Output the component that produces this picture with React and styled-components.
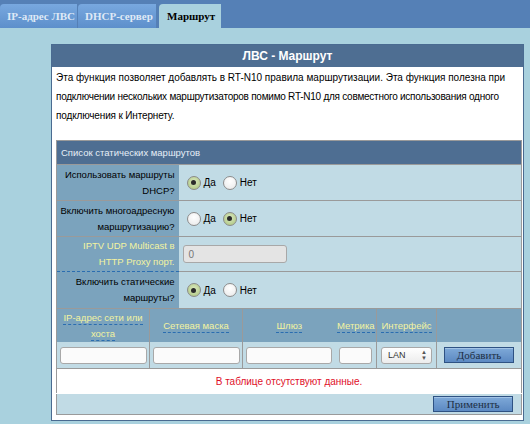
import React from "react";
import styled, { createGlobalStyle } from "styled-components";

const Global = createGlobalStyle`
  html, body { margin: 0; padding: 0; }
  body {
    background: #a9d1de;
    font-family: "Liberation Sans", Arial, sans-serif;
    font-size: 10px;
    color: #000;
  }
`;

const TabBar = styled.div`
  height: 28px;
  background: #5580b6;
  display: flex;
  align-items: flex-end;
  gap: 1px;
  box-sizing: border-box;
`;

const Tab = styled.div`
  height: 24px;
  box-sizing: border-box;
  padding: 0 0 0 ${(p) => (p.$active ? 8 : 7)}px;
  display: flex;
  align-items: center;
  white-space: nowrap;
  font-family: "Liberation Serif", "Times New Roman", serif;
  font-weight: bold;
  font-size: 11px;
  border-radius: 4px 0 0 0;
  margin-left: ${(p) => (p.$active ? "2px" : "0")};
  color: ${(p) => (p.$active ? "#000" : "#dfe9f6")};
  background: ${(p) =>
    p.$active ? "#a9d1de" : "linear-gradient(#78a8df, #5d8fcb)"};
  width: ${(p) => p.$w}px;
`;

const Panel = styled.div`
  margin: 16px 0 0 51px;
  width: 473px;
  box-sizing: border-box;
  border: 1px solid #4a6b91;
  background: #fff;
  padding-bottom: 5px;
`;

const PanelHeader = styled.div`
  height: 22px;
  background: #4e6e92;
  color: #fff;
  font-weight: bold;
  font-size: 12px;
  display: flex;
  align-items: center;
  justify-content: center;
`;

const Description = styled.div`
  padding: 1px 4px 0 4px;
  line-height: 19px;
  font-size: 10px;
  height: 72px;
  white-space: nowrap;
`;

const Line = styled.div`
  letter-spacing: ${(p) => p.$ls || 0}px;
`;

const Table = styled.table`
  margin-left: 4px;
  width: 465px;
  border-collapse: collapse;
  border: 1px solid #9a9a9a;
  table-layout: fixed;
  font-size: 9.5px;
`;

const HeadCell = styled.td`
  background: #4e6e92;
  color: #e6eef7;
  height: 23px;
  padding: 0 0 0 4px;
  border-bottom: 1px solid #9a9a9a;
`;

const LabelCell = styled.th`
  background: #7ba3bd;
  font-weight: normal;
  text-align: right;
  padding: 0 4px 0 0;
  line-height: 16px;
  white-space: nowrap;
  height: ${(p) => p.$h}px;
  box-sizing: border-box;
  border-bottom: 1px ${(p) => (p.$hint ? "dashed #2a6db0" : "solid #9a9a9a")};
  color: ${(p) => (p.$hint ? "#f3f3a0" : "#000")};
  vertical-align: middle;
`;

const ValueCell = styled.td`
  background: #c1dbe5;
  padding: 0 0 0 8px;
  border-bottom: 1px solid #9a9a9a;
  vertical-align: middle;
`;

const RadioGroup = styled.div`
  display: flex;
  align-items: center;
`;

const RadioLabel = styled.label`
  display: flex;
  align-items: center;
  margin-right: 7px;
  font-size: 10px;
`;

const RadioCircle = styled.span`
  width: 14px;
  height: 14px;
  box-sizing: border-box;
  border-radius: 50%;
  border: 1px solid #8b8b8b;
  margin-right: 3px;
  display: flex;
  align-items: center;
  justify-content: center;
  background: ${(p) =>
    p.$checked
      ? "radial-gradient(circle at 50% 40%, #dbe9c1, #a9c37a)"
      : "radial-gradient(circle at 50% 35%, #ffffff, #e8e8e8)"};
  &::after {
    content: "";
    width: 5px;
    height: 5px;
    border-radius: 50%;
    background: #2b2b2b;
    display: ${(p) => (p.$checked ? "block" : "none")};
  }
`;

const Radio = ({ checked, children }) => (
  <RadioLabel>
    <RadioCircle $checked={checked} />
    {children}
  </RadioLabel>
);

const PortInput = styled.div`
  width: 104px;
  height: 18px;
  box-sizing: border-box;
  border: 1px solid #a8a8a8;
  border-radius: 3px;
  background: #e4e4e4;
  color: #777;
  font-size: 10px;
  padding-left: 5px;
  display: flex;
  align-items: center;
  margin-left: -4px;
`;

const ColHead = styled.td`
  background: #7ba3bd;
  height: 33px;
  text-align: center;
  vertical-align: middle;
  color: #f3f3a0;
  line-height: 16px;
  white-space: nowrap;
  padding: 0 1px;
  border-left: ${(p) => (p.$noLeft ? "none" : "1px solid #9a9a9a")};
`;

const Dash = styled.span`
  border-bottom: 1px dashed #2a6db0;
  padding-bottom: 1px;
`;

const InputCell = styled.td`
  background: #c1dbe5;
  height: 26px;
  padding: 0;
  text-align: center;
  vertical-align: middle;
  border-left: ${(p) => (p.$noLeft ? "none" : "1px solid #9a9a9a")};
  border-bottom: 1px solid #9a9a9a;
`;

const TextBox = styled.div`
  width: ${(p) => p.$w}px;
  height: 17px;
  box-sizing: border-box;
  border: 1px solid #a8a8a8;
  border-radius: 3px;
  background: #fbfbfb;
  margin: 0 auto;
`;

const Select = styled.div`
  width: 51px;
  height: 17px;
  box-sizing: border-box;
  border: 1px solid #a8a8a8;
  border-radius: 3px;
  background: linear-gradient(#ffffff, #ececec);
  margin: 0 auto;
  display: flex;
  align-items: center;
  justify-content: space-between;
  padding: 0 4px 0 6px;
  font-size: 9px;
  color: #333;
`;

const Arrows = styled.span`
  display: flex;
  flex-direction: column;
  font-size: 6px;
  line-height: 6px;
  color: #555;
`;

const Button = styled.button`
  font-family: "Liberation Serif", "Times New Roman", serif;
  font-size: 11px;
  color: #1d2f45;
  height: 16px;
  padding: 0;
  width: ${(p) => p.$w}px;
  border: 1px solid #2e5283;
  background: linear-gradient(#7ea9d8, #5c89c2);
  box-shadow: inset 0 1px 0 #a2c3e6;
  line-height: 14px;
`;

const EmptyCell = styled.td`
  background: #fff;
  color: #e0102a;
  text-align: center;
  height: 24px;
  padding: 0;
  font-size: 10px;
  vertical-align: middle;
`;

const FooterCell = styled.td`
  background: #c1dbe5;
  height: 20px;
  padding: 0 8px 0 0;
  text-align: right;
  vertical-align: middle;
  border-top: 1px solid #ffffff;
`;

export default function App() {
  return (
    <>
      <Global />
      <TabBar>
        <Tab $w={77}>IP-адрес ЛВС</Tab>
        <Tab $w={78}>DHCP-сервер</Tab>
        <Tab $w={62} $active>Маршрут</Tab>
      </TabBar>
      <Panel>
        <PanelHeader>ЛВС - Маршрут</PanelHeader>
        <Description>
          <Line>Эта функция позволяет добавлять в RT-N10 правила маршрутизации. Эта функция полезна при</Line>
          <Line $ls={-0.25}>подключении нескольких маршрутизаторов помимо RT-N10 для совместного использования одного</Line>
          <Line $ls={-0.15}>подключения к Интернету.</Line>
        </Description>
        <Table>
          <colgroup>
            <col style={{ width: 93 }} />
            <col style={{ width: 29 }} />
            <col style={{ width: 64 }} />
            <col style={{ width: 93 }} />
            <col style={{ width: 41 }} />
            <col style={{ width: 60 }} />
            <col style={{ width: 85 }} />
          </colgroup>
          <tbody>
            <tr>
              <HeadCell colSpan={7}>Список статических маршрутов</HeadCell>
            </tr>
            <tr>
              <LabelCell colSpan={2} $h={36}>Использовать маршруты<br />DHCP?</LabelCell>
              <ValueCell colSpan={5}>
                <RadioGroup>
                  <Radio checked>Да</Radio>
                  <Radio>Нет</Radio>
                </RadioGroup>
              </ValueCell>
            </tr>
            <tr>
              <LabelCell colSpan={2} $h={36}>Включить многоадресную<br />маршрутизацию?</LabelCell>
              <ValueCell colSpan={5}>
                <RadioGroup>
                  <Radio>Да</Radio>
                  <Radio checked>Нет</Radio>
                </RadioGroup>
              </ValueCell>
            </tr>
            <tr>
              <LabelCell colSpan={2} $h={35} $hint>IPTV UDP Multicast в<br />HTTP Proxy порт.</LabelCell>
              <ValueCell colSpan={5}>
                <PortInput>0</PortInput>
              </ValueCell>
            </tr>
            <tr>
              <LabelCell colSpan={2} $h={37}>Включить статические<br />маршруты?</LabelCell>
              <ValueCell colSpan={5}>
                <RadioGroup>
                  <Radio checked>Да</Radio>
                  <Radio>Нет</Radio>
                </RadioGroup>
              </ValueCell>
            </tr>
            <tr>
              <ColHead $noLeft>
                <Dash>IP-адрес сети или</Dash>
                <br />
                <Dash>хоста</Dash>
              </ColHead>
              <ColHead colSpan={2}>
                <Dash>Сетевая маска</Dash>
              </ColHead>
              <ColHead>
                <Dash>Шлюз</Dash>
              </ColHead>
              <ColHead $noLeft>
                <Dash>Метрика</Dash>
              </ColHead>
              <ColHead>
                <Dash>Интерфейс</Dash>
              </ColHead>
              <ColHead />
            </tr>
            <tr>
              <InputCell $noLeft>
                <TextBox $w={87} />
              </InputCell>
              <InputCell colSpan={2}>
                <TextBox $w={87} />
              </InputCell>
              <InputCell>
                <TextBox $w={86} />
              </InputCell>
              <InputCell $noLeft>
                <TextBox $w={33} />
              </InputCell>
              <InputCell>
                <Select>
                  LAN
                  <Arrows>
                    <span>▲</span>
                    <span>▼</span>
                  </Arrows>
                </Select>
              </InputCell>
              <InputCell>
                <Button $w={70}>Добавить</Button>
              </InputCell>
            </tr>
            <tr>
              <EmptyCell colSpan={7}>В таблице отсутствуют данные.</EmptyCell>
            </tr>
            <tr>
              <FooterCell colSpan={7}>
                <Button $w={80}>Применить</Button>
              </FooterCell>
            </tr>
          </tbody>
        </Table>
      </Panel>
    </>
  );
}
